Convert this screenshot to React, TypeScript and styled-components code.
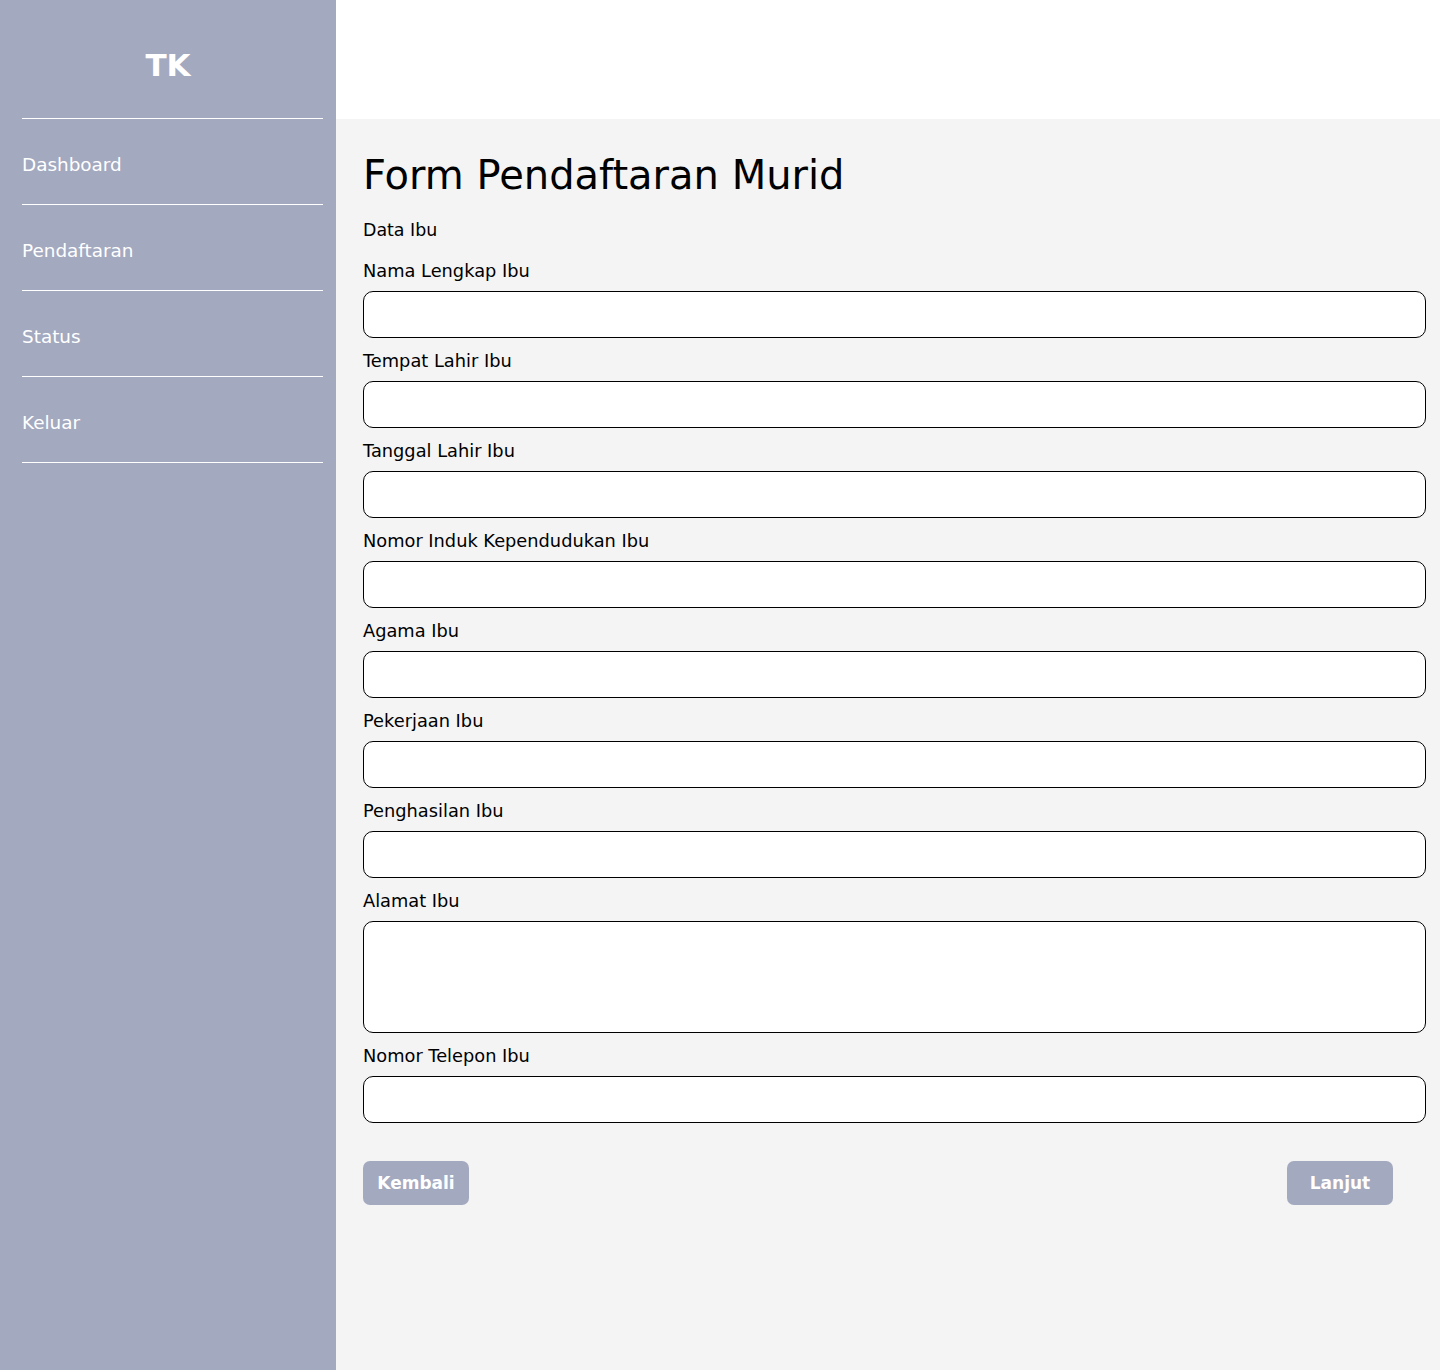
import React from "react";
import styled, { createGlobalStyle } from "styled-components";

const GlobalStyle = createGlobalStyle`
  html, body { margin: 0; padding: 0; }
  body { font-family: "DejaVu Sans", "Open Sans", sans-serif; background: #f4f4f4; }
  * { box-sizing: border-box; }
`;

const Shell = styled.div`
  display: flex;
  min-height: 1370px;
`;

const Sidebar = styled.aside`
  width: 336px;
  flex-shrink: 0;
  background: #a3a9bf;
  padding: 0 13px 0 22px;
  display: flex;
  flex-direction: column;
`;

const Logo = styled.div`
  height: 119px;
  display: flex;
  align-items: center;
  justify-content: center;
  color: #fff;
  font-weight: 700;
  font-size: 31px;
  border-bottom: 1px solid #fff;
  padding-top: 12px;
  padding-right: 9px;
`;

const NavItem = styled.a`
  display: flex;
  align-items: center;
  height: 86px;
  padding-top: 5px;
  color: #fff;
  font-size: 18.4px;
  text-decoration: none;
  border-bottom: 1px solid #fff;
`;

const Main = styled.main`
  flex: 1;
  display: flex;
  flex-direction: column;
`;

const TopBar = styled.header`
  height: 119px;
  background: #fff;
`;

const Content = styled.section`
  flex: 1;
  background: #f4f4f4;
  padding: 26px 14px 40px 27px;
  display: flex;
  flex-direction: column;
`;

const Title = styled.h1`
  margin: 0;
  font-size: 40px;
  font-weight: 400;
  line-height: 60px;
  color: #000;
`;

const Section = styled.div`
  margin-top: 12px;
  font-size: 17.4px;
  line-height: 27px;
  color: #000;
  margin-bottom: 13px;
`;

const Field = styled.div`
  display: flex;
  flex-direction: column;
  margin-bottom: 9px;
`;

const Label = styled.label`
  font-size: 17.8px;
  line-height: 27px;
  color: #000;
  margin-bottom: 7px;
`;

const Input = styled.input`
  height: 47px;
  width: 100%;
  border: 1px solid #000;
  border-radius: 10px;
  background: #fff;
  outline: none;
  padding: 0 12px;
  font: inherit;
`;

const TextArea = styled.textarea`
  height: 112px;
  width: 100%;
  border: 1px solid #000;
  border-radius: 10px;
  background: #fff;
  outline: none;
  resize: none;
  padding: 10px 12px;
  font: inherit;
  display: block;
`;

const Actions = styled.div`
  display: flex;
  justify-content: space-between;
  margin-top: 29px;
  padding-right: 33px;
`;

const Button = styled.button`
  width: 106px;
  height: 44px;
  border: none;
  border-radius: 7px;
  background: #a3a9bf;
  color: #fff;
  font-family: inherit;
  font-weight: 700;
  font-size: 17px;
  cursor: pointer;
`;

const fields: { label: string; multiline?: boolean }[] = [
  { label: "Nama Lengkap Ibu" },
  { label: "Tempat Lahir Ibu" },
  { label: "Tanggal Lahir Ibu" },
  { label: "Nomor Induk Kependudukan Ibu" },
  { label: "Agama Ibu" },
  { label: "Pekerjaan Ibu" },
  { label: "Penghasilan Ibu" },
  { label: "Alamat Ibu", multiline: true },
  { label: "Nomor Telepon Ibu" },
];

export default function App() {
  return (
    <>
      <GlobalStyle />
      <Shell>
        <Sidebar>
          <Logo>TK</Logo>
          {["Dashboard", "Pendaftaran", "Status", "Keluar"].map((n) => (
            <NavItem key={n} href="#">
              {n}
            </NavItem>
          ))}
        </Sidebar>
        <Main>
          <TopBar />
          <Content>
            <Title>Form Pendaftaran Murid</Title>
            <Section>Data Ibu</Section>
            {fields.map((f) => (
              <Field key={f.label}>
                <Label>{f.label}</Label>
                {f.multiline ? <TextArea /> : <Input />}
              </Field>
            ))}
            <Actions>
              <Button>Kembali</Button>
              <Button>Lanjut</Button>
            </Actions>
          </Content>
        </Main>
      </Shell>
    </>
  );
}
